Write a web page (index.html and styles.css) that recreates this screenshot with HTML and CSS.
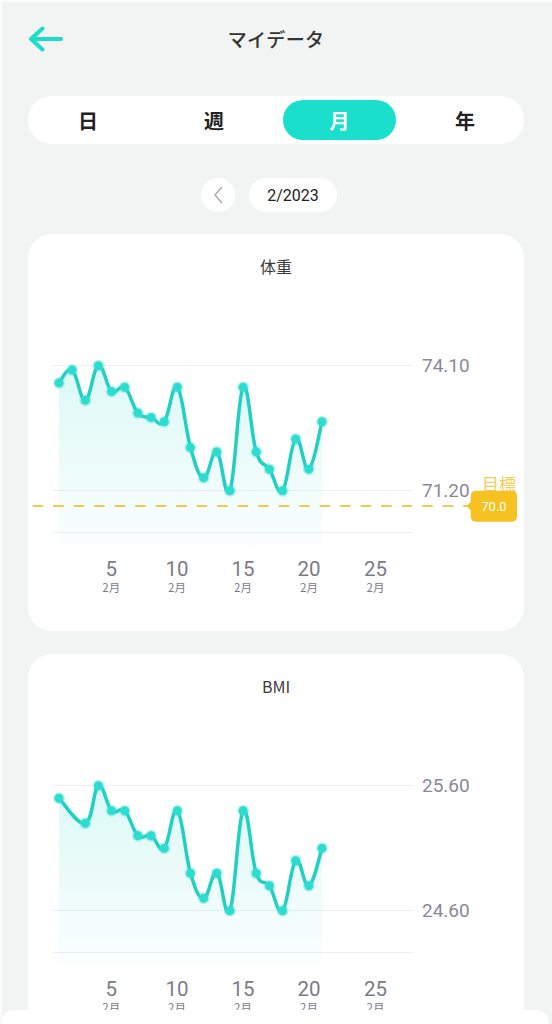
FILE: index.html
```html
<!DOCTYPE html>
<html lang="ja">
<head>
<meta charset="utf-8">
<title>マイデータ</title>
<link rel="stylesheet" href="styles.css">
</head>
<body>
<div class="screen">
  <header class="topbar">
    <button class="back" aria-label="戻る">
      <svg width="36" height="26" viewBox="0 0 36 26"><path class="back-path" d="M4 13H34M15.5 2.5L4 13L15.5 23.5"/></svg>
    </button>
    <h1 class="title">マイデータ</h1>
    <span class="spacer"></span>
  </header>

  <nav class="segments">
    <span class="seg">日</span>
    <span class="seg">週</span>
    <span class="seg active">月</span>
    <span class="seg">年</span>
  </nav>

  <div class="period">
    <button class="prev" aria-label="前へ">
      <svg width="12" height="18" viewBox="0 0 12 18"><path class="chev" d="M9.5 1.5L3 9l6.5 7.5"/></svg>
    </button>
    <span class="date">2/2023</span>
  </div>

  <section class="card">
    <h2 class="card-title">体重</h2>
    <svg class="chart" width="496" height="353" viewBox="0 0 496 353"
         data-values="73.7,74.0,73.3,74.1,73.5,73.6,73.0,72.9,72.8,73.6,72.2,71.5,72.1,71.2,73.6,72.1,71.7,71.2,72.4,71.7,72.8"
         data-top="74.1" data-bottom="71.2">
      <defs>
        <linearGradient id="areaFill" gradientUnits="userSpaceOnUse" x1="0" y1="80" x2="0" y2="268">
          <stop offset="0" stop-color="#1ad6c5" stop-opacity="0.16"/>
          <stop offset="1" stop-color="#1ad6c5" stop-opacity="0.02"/>
        </linearGradient>
      </defs>
      <line class="grid" x1="24" y1="87.5" x2="385" y2="87.5"/>
      <line class="grid" x1="24" y1="212.5" x2="385" y2="212.5"/>
      <line class="grid" x1="24" y1="254.5" x2="385" y2="254.5"/>
      <g class="plot"></g>
      <text class="ylab" x="394" y="94">74.10</text>
      <text class="ylab" x="394" y="219">71.20</text>
      <line class="goal" x1="4.7" y1="228" x2="440" y2="228"/>
      <text class="goal-label" x="471" y="213">目標</text>
      <polygon class="badge" points="443.5,223 438.5,228 443.5,233"/>
      <rect class="badge" x="442.7" y="212.7" width="46.3" height="31" rx="5"/>
      <text class="badge-text" x="466" y="232.5">70.0</text>
      <g class="xaxis">
        <text class="xnum" x="83.3" y="298">5</text><text class="xmon" x="83.3" y="313.5">2月</text>
        <text class="xnum" x="149" y="298">10</text><text class="xmon" x="149" y="313.5">2月</text>
        <text class="xnum" x="215" y="298">15</text><text class="xmon" x="215" y="313.5">2月</text>
        <text class="xnum" x="281" y="298">20</text><text class="xmon" x="281" y="313.5">2月</text>
        <text class="xnum" x="347.5" y="298">25</text><text class="xmon" x="347.5" y="313.5">2月</text>
      </g>
    </svg>
  </section>

  <section class="card">
    <h2 class="card-title">BMI</h2>
    <svg class="chart" width="496" height="353" viewBox="0 0 496 353"
         data-values="25.5,,25.3,25.6,25.4,25.4,25.2,25.2,25.1,25.4,24.9,24.7,24.9,24.6,25.4,24.9,24.8,24.6,25.0,24.8,25.1"
         data-top="25.6" data-bottom="24.6">
      <line class="grid" x1="24" y1="87.5" x2="385" y2="87.5"/>
      <line class="grid" x1="24" y1="212.5" x2="385" y2="212.5"/>
      <line class="grid" x1="24" y1="254.5" x2="385" y2="254.5"/>
      <g class="plot"></g>
      <text class="ylab" x="394" y="94">25.60</text>
      <text class="ylab" x="394" y="219">24.60</text>
      <g class="xaxis">
        <text class="xnum" x="83.3" y="298">5</text><text class="xmon" x="83.3" y="313.5">2月</text>
        <text class="xnum" x="149" y="298">10</text><text class="xmon" x="149" y="313.5">2月</text>
        <text class="xnum" x="215" y="298">15</text><text class="xmon" x="215" y="313.5">2月</text>
        <text class="xnum" x="281" y="298">20</text><text class="xmon" x="281" y="313.5">2月</text>
        <text class="xnum" x="347.5" y="298">25</text><text class="xmon" x="347.5" y="313.5">2月</text>
      </g>
    </svg>
  </section>
</div>
<div class="sheet"></div>
<script src="script.js"></script>
</body>
</html>
```

FILE: styles.css
```css
* { box-sizing: border-box; }

html, body {
  margin: 0;
  padding: 0;
  background: #f2f4f4;
}

body {
  font-family: "Noto Sans CJK JP", "Noto Sans", sans-serif;
  color: #222;
}

.screen {
  min-height: 1024px;
  background: #f2f4f4;
  box-shadow: inset 2px 2px 0 #fbfbfb;
  overflow: hidden;
}

.topbar {
  height: 78px;
  display: grid;
  grid-template-columns: 1fr auto 1fr;
  align-items: center;
}

.back {
  justify-self: start;
  margin: 0 0 0 27px;
  padding: 0;
  border: 0;
  background: none;
  width: 36px;
  height: 26px;
  display: block;
}
.back svg { display: block; }
.back-path {
  fill: none;
  stroke: #1cdccb;
  stroke-width: 4;
  stroke-linecap: round;
  stroke-linejoin: round;
}

.title {
  margin: 0;
  font-size: 19px;
  font-weight: 500;
  color: #333;
  line-height: 26px;
  letter-spacing: 0.3px;
}

.segments {
  margin: 18px 28px 0;
  height: 48px;
  background: #fff;
  border-radius: 24px;
  display: grid;
  grid-template-columns: repeat(4, 1fr);
}

.seg {
  margin: 4px;
  border-radius: 20px;
  display: flex;
  align-items: center;
  justify-content: center;
  font-size: 20px;
  font-weight: 700;
  color: #222;
}
.seg:first-child { margin-left: 2px; margin-right: 6px; }
.seg:last-child { margin-left: 7px; margin-right: 1px; }
.seg.active {
  margin-left: 7px;
  background: #1bdfcd;
  color: #fff;
}

.period {
  margin-top: 34px;
  padding-right: 14px;
  display: flex;
  justify-content: center;
  gap: 14px;
  height: 34px;
}

.prev {
  width: 34px;
  height: 34px;
  border-radius: 50%;
  border: 0;
  padding: 0;
  background: #fff;
  display: flex;
  align-items: center;
  justify-content: center;
}
.prev svg { display: block; }
.chev {
  fill: none;
  stroke: #a9a9a9;
  stroke-width: 1.4;
  stroke-linecap: round;
  stroke-linejoin: round;
}

.date {
  width: 88px;
  height: 34px;
  border-radius: 17px;
  background: #fff;
  display: flex;
  align-items: center;
  justify-content: center;
  font-family: Roboto, "Noto Sans", sans-serif;
  font-size: 16px;
  color: #222;
}

.card {
  margin: 22px 28px 0;
  height: 397px;
  background: #fff;
  border-radius: 24px;
  padding-top: 20px;
}
.card + .card { margin-top: 23px; }

.card-title {
  margin: 0;
  text-align: center;
  font-size: 16px;
  line-height: 24px;
  font-weight: 400;
  color: #3a3a3a;
}

.chart { display: block; overflow: visible; }

.grid { stroke: #efefef; stroke-width: 1; }

.area { fill: url(#areaFill); }
.line {
  fill: none;
  stroke: #20d0c0;
  stroke-width: 3.5;
  stroke-linecap: round;
  stroke-linejoin: round;
}
.dot {
  fill: #2cdcd0;
  stroke: rgba(60, 222, 210, 0.35);
  stroke-width: 3;
}

.ylab {
  font-family: Roboto, "Noto Sans", sans-serif;
  font-size: 19px;
  fill: #898996;
}

.goal {
  stroke: #f2c94c;
  stroke-width: 2;
  stroke-dasharray: 10.5 10;
}
.goal-label {
  font-size: 17px;
  fill: #f4cd58;
  text-anchor: middle;
}
.badge { fill: #f6c221; }
.badge-text {
  font-family: Roboto, "Noto Sans", sans-serif;
  font-size: 13px;
  fill: #fff;
  text-anchor: middle;
}

.xnum {
  font-family: Roboto, "Noto Sans", sans-serif;
  font-size: 20.5px;
  fill: #7b7b87;
  text-anchor: middle;
}
.xmon {
  font-size: 11.5px;
  fill: #7b7b87;
  text-anchor: middle;
}

.sheet {
  position: fixed;
  left: 2px;
  right: 3px;
  bottom: 0;
  height: 14px;
  background: #fff;
  border-radius: 12px 12px 0 0;
}
```

FILE: script.js
```js
(function () {
  var NS = 'http://www.w3.org/2000/svg';
  var Y_TOP = 87.7, Y_BOT = 212.7, X0 = 31, DX = 13.15, FLOOR = 267, K = 0.2;

  function f(n) { return n.toFixed(2); }

  document.querySelectorAll('svg.chart').forEach(function (svg) {
    var vals = svg.getAttribute('data-values').split(',');
    var vTop = parseFloat(svg.getAttribute('data-top'));
    var vBot = parseFloat(svg.getAttribute('data-bottom'));
    var pts = [];
    vals.forEach(function (v, i) {
      if (v.trim() === '') return;
      var y = Y_TOP + (vTop - parseFloat(v)) * (Y_BOT - Y_TOP) / (vTop - vBot);
      pts.push([X0 + i * DX, y]);
    });

    var d = 'M' + f(pts[0][0]) + ',' + f(pts[0][1]);
    for (var j = 1; j < pts.length; j++) {
      var pp = pts[Math.max(j - 2, 0)], p = pts[j - 1], c = pts[j], n = pts[Math.min(j + 1, pts.length - 1)];
      var c1x = p[0] + (c[0] - pp[0]) * K, c1y = p[1] + (c[1] - pp[1]) * K;
      var c2x = c[0] - (n[0] - p[0]) * K, c2y = c[1] - (n[1] - p[1]) * K;
      d += ' C' + f(c1x) + ',' + f(c1y) + ' ' + f(c2x) + ',' + f(c2y) + ' ' + f(c[0]) + ',' + f(c[1]);
    }

    var g = svg.querySelector('.plot');

    var area = document.createElementNS(NS, 'path');
    area.setAttribute('class', 'area');
    area.setAttribute('d', d + ' L' + f(pts[pts.length - 1][0]) + ',' + FLOOR + ' L' + f(pts[0][0]) + ',' + FLOOR + ' Z');
    g.appendChild(area);

    var line = document.createElementNS(NS, 'path');
    line.setAttribute('class', 'line');
    line.setAttribute('d', d);
    g.appendChild(line);

    pts.forEach(function (pt) {
      var c = document.createElementNS(NS, 'circle');
      c.setAttribute('class', 'dot');
      c.setAttribute('cx', f(pt[0]));
      c.setAttribute('cy', f(pt[1]));
      c.setAttribute('r', '4.5');
      g.appendChild(c);
    });
  });
})();
```
